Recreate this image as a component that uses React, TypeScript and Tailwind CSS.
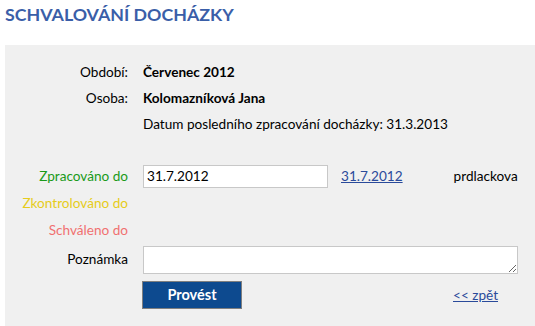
export default function App() {
  const font = { fontFamily: 'Lato, "Open Sans", sans-serif' };
  return (
    <div className="w-[535px] h-[326px] overflow-hidden bg-white text-[13.6px] text-black" style={font}>
      <h1 className="pl-[5px] pt-[4px] h-[45px] text-[17.8px] font-bold text-[#3a5ea8] leading-[20px]">SCHVALOVÁNÍ DOCHÁZKY</h1>
      <div className="ml-[5px] bg-[#f0f0f0] h-[300px] pt-[14px]">
        <div className="flex flex-col">
          <div className="flex items-center h-[26px]">
            <div className="w-[123px] text-right">Období:</div>
            <div className="ml-[15px] font-bold">Červenec 2012</div>
          </div>
          <div className="flex items-center h-[26px]">
            <div className="w-[123px] text-right">Osoba:</div>
            <div className="ml-[15px] font-bold">Kolomazníková Jana</div>
          </div>
          <div className="flex items-center h-[27px]">
            <div className="w-[123px]"></div>
            <div className="ml-[15px]">Datum posledního zpracování docházky: 31.3.2013</div>
          </div>
        </div>
        <div className="mt-[26px] flex items-center h-[24px]">
          <div className="w-[123px] text-right text-[#1a9a1a]">Zpracováno do</div>
          <input
            className="ml-[15px] w-[185px] h-[23px] bg-white border border-[#c8c8c8] px-[3px] text-[13.6px] outline-none"
            defaultValue="31.7.2012"
          />
          <a href="#" className="ml-[13px] text-[#2a4a9a] underline">31.7.2012</a>
          <div className="ml-[51px]">prdlackova</div>
        </div>
        <div className="flex items-center h-[27px] mt-[2px]">
          <div className="w-[123px] text-right text-[#e6cc1a]">Zkontrolováno do</div>
        </div>
        <div className="flex items-center h-[26px]">
          <div className="w-[123px] text-right text-[#f07070]">Schváleno do</div>
        </div>
        <div className="flex items-center h-[29px] mt-[2px]">
          <div className="w-[123px] text-right">Poznámka</div>
          <textarea className="ml-[15px] w-[375px] h-[28px] bg-white border border-[#c8c8c8] resize-y outline-none"></textarea>
        </div>
        <div className="flex items-center mt-[7px]">
          <div className="w-[123px]"></div>
          <button className="ml-[14px] w-[100px] h-[28px] bg-[#0d4a8f] border border-[#7f7f7f] text-white font-bold text-[14.5px]">Provést</button>
          <a href="#" className="ml-[211px] text-[#2a4a9a] underline">&lt;&lt; zpět</a>
        </div>
      </div>
    </div>
  );
}
